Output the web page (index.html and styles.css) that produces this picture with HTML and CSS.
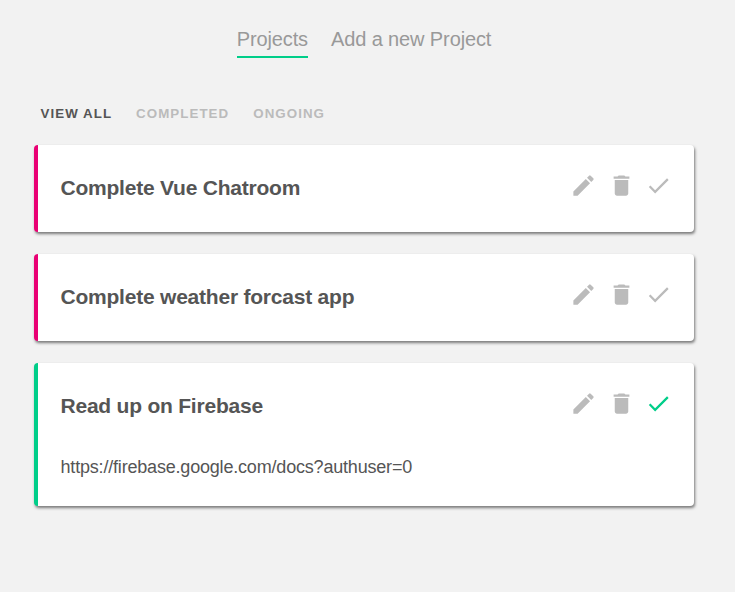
FILE: index.html
```html
<!DOCTYPE html>
<html lang="en">
<head>
<meta charset="utf-8">
<title>Projects</title>
<link rel="stylesheet" href="styles.css">
</head>
<body>
<svg width="0" height="0" class="sprite">
<symbol id="edit" viewBox="0 0 24 24"><path d="M3 17.25V21h3.75L17.81 9.94l-3.75-3.75L3 17.25zM20.71 7.04a1 1 0 0 0 0-1.41l-2.34-2.34a1 1 0 0 0-1.41 0l-1.83 1.83 3.75 3.75 1.83-1.83z"/></symbol>
<symbol id="delete" viewBox="0 0 24 24"><path d="M6 19c0 1.1.9 2 2 2h8c1.1 0 2-.9 2-2V7H6v12zM19 4h-3.5l-1-1h-5l-1 1H5v2h14V4z"/></symbol>
<symbol id="done" viewBox="0 0 24 24"><path d="M9 16.17 4.83 12l-1.42 1.41L9 19 21 7l-1.41-1.41L9 16.17z"/></symbol>
</svg>
<nav class="main-nav"><a class="active">Projects</a><a>Add a new Project</a></nav>
<main>
<nav class="filters"><button class="active">View all</button><button>Completed</button><button>Ongoing</button></nav>
<article class="project">
<div class="actions"><h3>Complete Vue Chatroom</h3><div class="icons"><svg><use href="#edit"/></svg><svg><use href="#delete"/></svg><svg><use href="#done"/></svg></div></div>
</article>
<article class="project">
<div class="actions"><h3>Complete weather forcast app</h3><div class="icons"><svg><use href="#edit"/></svg><svg><use href="#delete"/></svg><svg><use href="#done"/></svg></div></div>
</article>
<article class="project complete">
<div class="actions"><h3>Read up on Firebase</h3><div class="icons"><svg><use href="#edit"/></svg><svg><use href="#delete"/></svg><svg class="tick"><use href="#done"/></svg></div></div>
<p>https://firebase.google.com/docs?authuser=0</p>
</article>
</main>
</body>
</html>
```
FILE: styles.css
```css
* { box-sizing: border-box; }
body { margin: 0; background: #f2f2f2; font-family: "Liberation Sans", Arial, sans-serif; color: #555; }
.sprite { display: block; }
.main-nav { display: flex; justify-content: center; gap: 23px; padding: 27px 7px 0 0; height: 105px; font-size: 20px; line-height: 24px; letter-spacing: -.12px; color: #999; }
.main-nav a { height: 31px; }
.main-nav .active { border-bottom: 2px solid #00ce89; }
main { width: 660px; margin-left: 34px; }
.filters { display: flex; gap: 24px; padding-left: 6.5px; height: 40px; }
.filters button { height: 18px; border: 0; padding: 0; background: none; font: bold 13.333px/18px "Liberation Sans", Arial, sans-serif; letter-spacing: 1.05px; text-transform: uppercase; color: #bbb; }
.filters .active { color: #555; }
.project { height: 87px; margin-bottom: 22px; padding: 28px 22px 0 22.5px; background: #fff; border-left: 4px solid #e90074; border-radius: 4px; box-shadow: 1px 2px 3px rgba(0,0,0,.5); }
.complete { height: 143px; border-left-color: #00ce89; }
.actions { display: flex; justify-content: space-between; height: 27px; }
h3 { margin: 3px 0 0; font-size: 21px; line-height: 24px; letter-spacing: -.22px; }
.icons { display: flex; gap: 10.5px; margin-top: -1px; }
.icons svg { width: 27px; height: 27px; fill: #bbb; }
.icons .tick { fill: #00ce89; }
p { margin: 38px 0 0; font-size: 18px; line-height: 22px; letter-spacing: -.19px; }
```
